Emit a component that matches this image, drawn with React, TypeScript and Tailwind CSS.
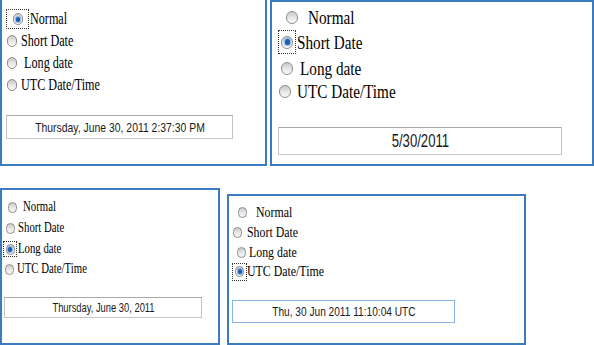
import React from 'react';

type Row = {
  label: string;
  h: string;
  radioMl: string;
  textMl: string;
  selected?: boolean;
  focus?: string; // classes for the dotted focus wrapper
};

type PanelDef = {
  box: string;
  pt: string;
  radio: string;
  dot: string;
  text: string;
  rows: Row[];
  field: string;
  fieldText: string;
  value: string;
};

function Radio({ size, dot, selected }: { size: string; dot: string; selected?: boolean }) {
  return (
    <span
      className={`${size} shrink-0 rounded-full border border-[#8e8e8e] bg-linear-to-b from-[#c9c9c9] via-[#e6e6e6] to-[#fafafa] flex items-center justify-center`}
    >
      {selected && <span className={`${dot} rounded-full bg-[#1d5fae] ring-1 ring-[#8fb6e0]`} />}
    </span>
  );
}

const panels: PanelDef[] = [
  {
    box: 'w-[267px] h-[166px] border-l-2 border-r-2 border-b-2',
    pt: 'pt-[8px]',
    radio: 'w-[10px] h-[12px]',
    dot: 'w-[4px] h-[5px]',
    text: 'text-[16px] scale-x-[0.76]',
    rows: [
      { label: 'Normal', h: 'h-[22px]', radioMl: 'ml-[4px]', textMl: 'ml-[1px]', selected: true, focus: 'w-[23px] h-[20px]' },
      { label: 'Short Date', h: 'h-[22px]', radioMl: 'ml-[5px]', textMl: 'ml-[4px]' },
      { label: ' Long date', h: 'h-[22px]', radioMl: 'ml-[5px]', textMl: 'ml-[4px]' },
      { label: 'UTC Date/Time', h: 'h-[22px]', radioMl: 'ml-[5px]', textMl: 'ml-[4px]' },
    ],
    field: 'ml-[4px] mt-[19px] w-[227px] h-[24px] border-[#c4c4c4] border-t-[#a9a9a9]',
    fieldText: 'text-[13px] scale-x-[0.8]',
    value: 'Thursday, June 30, 2011 2:37:30 PM',
  },
  {
    box: 'w-[324px] h-[166px] border-2',
    pt: 'pt-[3px]',
    radio: 'w-[12px] h-[13px]',
    dot: 'w-[5px] h-[6px]',
    text: 'text-[19px] scale-x-[0.8]',
    rows: [
      { label: 'Normal', h: 'h-[24px]', radioMl: 'ml-[14px]', textMl: 'ml-[10px]' },
      { label: 'Short Date', h: 'h-[26px]', radioMl: 'ml-[6px]', textMl: 'ml-[1px]', selected: true, focus: 'w-[18px] h-[24px]' },
      { label: 'Long date', h: 'h-[26px]', radioMl: 'ml-[9px]', textMl: 'ml-[7px]' },
      { label: 'UTC Date/Time', h: 'h-[20px]', radioMl: 'ml-[7px]', textMl: 'ml-[6px]' },
    ],
    field: 'ml-[6px] mt-[26px] w-[284px] h-[28px] border-[#c4c4c4] border-t-[#a9a9a9]',
    fieldText: 'text-[18px] scale-x-[0.73]',
    value: '5/30/2011',
  },
  {
    box: 'w-[220px] h-[157px] border-2',
    pt: 'pt-[7px]',
    radio: 'w-[9px] h-[11px]',
    dot: 'w-[4px] h-[5px]',
    text: 'text-[14px] scale-x-[0.77]',
    rows: [
      { label: 'Normal', h: 'h-[20px]', radioMl: 'ml-[6px]', textMl: 'ml-[6px]' },
      { label: 'Short Date', h: 'h-[22px]', radioMl: 'ml-[4px]', textMl: 'ml-[3px]' },
      { label: 'Long date', h: 'h-[20px]', radioMl: 'ml-[1px]', textMl: 'ml-[1px]', selected: true, focus: 'w-[14px] h-[16px]' },
      { label: 'UTC Date/Time', h: 'h-[20px]', radioMl: 'ml-[3px]', textMl: 'ml-[3px]' },
    ],
    field: 'ml-[2px] mt-[18px] w-[198px] h-[21px] border-[#c4c4c4] border-t-[#a9a9a9]',
    fieldText: 'text-[12px] scale-x-[0.78]',
    value: 'Thursday, June 30, 2011',
  },
  {
    box: 'w-[299px] h-[151px] border-2',
    pt: 'pt-[6px]',
    radio: 'w-[9px] h-[11px]',
    dot: 'w-[4px] h-[5px]',
    text: 'text-[15px] scale-x-[0.79]',
    rows: [
      { label: 'Normal', h: 'h-[20px]', radioMl: 'ml-[9px]', textMl: 'ml-[9px]' },
      { label: 'Short Date', h: 'h-[20px]', radioMl: 'ml-[4px]', textMl: 'ml-[5px]' },
      { label: 'Long date', h: 'h-[20px]', radioMl: 'ml-[8px]', textMl: 'ml-[3px]' },
      { label: 'UTC Date/Time', h: 'h-[19px]', radioMl: 'ml-[3px]', textMl: 'ml-0', selected: true, focus: 'w-[15px] h-[18px]' },
    ],
    field: 'ml-[3px] mt-[19px] w-[223px] h-[23px] border-[#86b3e3]',
    fieldText: 'text-[13px] scale-x-[0.78]',
    value: 'Thu, 30 Jun 2011 11:10:04 UTC',
  },
];

function Panel({ p }: { p: PanelDef }) {
  return (
    <div className={`${p.box} border-[#3c7bbf] bg-white shrink-0 flex flex-col ${p.pt}`}>
      {p.rows.map((r) => (
        <div key={r.label} className={`${r.h} flex items-center`}>
          {r.focus ? (
            <span className={`${r.radioMl} ${r.focus} border border-dotted border-[#333] flex items-center justify-center shrink-0`}>
              <Radio size={p.radio} dot={p.dot} selected={r.selected} />
            </span>
          ) : (
            <span className={r.radioMl}>
              <Radio size={p.radio} dot={p.dot} selected={r.selected} />
            </span>
          )}
          <span className={`${r.textMl} ${p.text} inline-block origin-left whitespace-pre leading-none text-black font-['Liberation_Serif',serif]`}>
            {r.label}
          </span>
        </div>
      ))}
      <div className={`${p.field} border bg-white flex items-center justify-center shrink-0`}>
        <span className={`${p.fieldText} inline-block origin-center whitespace-nowrap leading-none text-[#1a1a1a] font-['Liberation_Sans',Arial,sans-serif]`}>
          {p.value}
        </span>
      </div>
    </div>
  );
}

export default function App() {
  return (
    <div className="w-[594px] h-[345px] bg-white overflow-hidden flex flex-col">
      <div className="flex gap-[3px]">
        <Panel p={panels[0]} />
        <Panel p={panels[1]} />
      </div>
      <div className="mt-[22px] flex items-end gap-[7px]">
        <Panel p={panels[2]} />
        <Panel p={panels[3]} />
      </div>
    </div>
  );
}
